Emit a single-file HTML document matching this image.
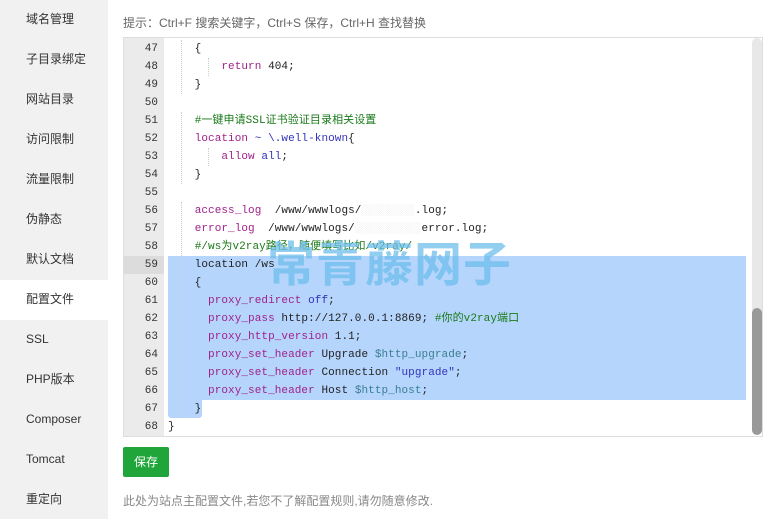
<!DOCTYPE html>
<html><head><meta charset="utf-8"><style>
*{margin:0;padding:0;box-sizing:border-box}
body{width:776px;height:519px;background:#fff;position:relative;overflow:hidden;font-family:"Liberation Sans","Noto Sans CJK SC",sans-serif}
.side{position:absolute;left:0;top:0;width:108px;height:519px;background:#f1f1f1}
.side div{position:absolute;left:26px;font-size:12px;color:#333;line-height:16px}
.act{position:absolute;left:0;top:280px;width:108px;height:40px;background:#fff}
.tip{position:absolute;left:123px;top:14px;font-size:12px;color:#666}
.ed{position:absolute;left:123px;top:37px;width:640px;height:400px;border:1px solid #ddd;overflow:hidden;background:#fff}
.gut{position:absolute;left:0;top:0;width:40px;height:400px;background:#ebebeb}
.sel{position:absolute;background:#b5d5fd}
.ln{position:absolute;left:0;width:34px;text-align:right;font:11px "Liberation Mono",monospace;color:#333;line-height:18px;height:18px}
.cl{position:absolute;left:44px;font:11px "Liberation Mono","Noto Sans CJK SC",monospace;letter-spacing:.07px;color:#222;line-height:18px;white-space:pre}
.k{color:#a0218a}.v{color:#3333bb}.c{color:#1a7a1a}.s{color:#3a7f8f}
.g{position:absolute;width:0;border-left:1px dotted #ccc;height:18px}
.wm{position:absolute;left:267px;top:225px;font:bold 48px "Noto Sans CJK SC",sans-serif;color:rgba(110,190,235,.75);letter-spacing:1px}
.sb{position:absolute;left:752px;top:38px;width:10px;height:397px;background:#e8e8e8;border-radius:5px}
.th{position:absolute;left:752px;top:308px;width:10px;height:127px;background:#999;border-radius:5px}
.btn{position:absolute;left:123px;top:447px;width:46px;height:30px;background:#20a53a;border-radius:2px;color:#fff;font-size:12px;line-height:30px;text-align:center}
.note{position:absolute;left:123px;top:492px;font-size:12px;color:#888}
</style></head><body>
<div class="side">
<div class="act" style="left:0;top:280px"></div>
<div style="top:11px">域名管理</div><div style="top:51px">子目录绑定</div><div style="top:91px">网站目录</div><div style="top:131px">访问限制</div><div style="top:171px">流量限制</div><div style="top:211px">伪静态</div><div style="top:251px">默认文档</div><div style="top:291px">配置文件</div><div style="top:331px">SSL</div><div style="top:371px">PHP版本</div><div style="top:411px">Composer</div><div style="top:451px">Tomcat</div><div style="top:491px">重定向</div>
</div>
<div class="tip">提示：Ctrl+F 搜索关键字，Ctrl+S 保存，Ctrl+H 查找替换</div>
<div class="ed">
<div class="gut"></div>
<div class="ln" style="top:218px;height:18px;background:#dcdcdc;width:40px;padding-right:6px">&nbsp;</div>
<div class="sel" style="left:44px;top:218px;width:578px;height:144px"></div>
<div class="sel" style="left:44px;top:362px;width:34px;height:18px;border-radius:0 0 3px 3px"></div>
<div class="ln" style="top:2px">47</div><div class="ln" style="top:20px">48</div><div class="ln" style="top:38px">49</div><div class="ln" style="top:56px">50</div><div class="ln" style="top:74px">51</div><div class="ln" style="top:92px">52</div><div class="ln" style="top:110px">53</div><div class="ln" style="top:128px">54</div><div class="ln" style="top:146px">55</div><div class="ln" style="top:164px">56</div><div class="ln" style="top:182px">57</div><div class="ln" style="top:200px">58</div><div class="ln" style="top:218px">59</div><div class="ln" style="top:236px">60</div><div class="ln" style="top:254px">61</div><div class="ln" style="top:272px">62</div><div class="ln" style="top:290px">63</div><div class="ln" style="top:308px">64</div><div class="ln" style="top:326px">65</div><div class="ln" style="top:344px">66</div><div class="ln" style="top:362px">67</div><div class="ln" style="top:380px">68</div>
<div class="cl" style="top:2px">    {</div>
<div class="cl" style="top:20px">        <span class="k">return</span> 404;</div>
<div class="cl" style="top:38px">    }</div>
<div class="cl" style="top:74px">    <span class="c">#一键申请SSL证书验证目录相关设置</span></div>
<div class="cl" style="top:92px">    <span class="k">location</span> <span class="v">~ \.well-known</span>{</div>
<div class="cl" style="top:110px">        <span class="k">allow</span> <span class="v">all</span>;</div>
<div class="cl" style="top:128px">    }</div>
<div class="cl" style="top:164px">    <span class="k">access_log</span>  /www/wwwlogs/<span style="color:#ddd">░░░░░░░░</span>.log;</div>
<div class="cl" style="top:182px">    <span class="k">error_log</span>  /www/wwwlogs/<span style="color:#ddd">░░░░░░░░░░</span>error.log;</div>
<div class="cl" style="top:200px">    <span class="c">#/ws为v2ray路径，随便填写比如/v2ray/</span></div>
<div class="cl" style="top:218px">    location /ws</div>
<div class="cl" style="top:236px">    {</div>
<div class="cl" style="top:254px">      <span class="k">proxy_redirect</span> <span class="v">off</span>;</div>
<div class="cl" style="top:272px">      <span class="k">proxy_pass</span> http://127.0.0.1:8869; <span class="c">#你的v2ray端口</span></div>
<div class="cl" style="top:290px">      <span class="k">proxy_http_version</span> 1.1;</div>
<div class="cl" style="top:308px">      <span class="k">proxy_set_header</span> Upgrade <span class="s">$http_upgrade</span>;</div>
<div class="cl" style="top:326px">      <span class="k">proxy_set_header</span> Connection <span class="v">"upgrade"</span>;</div>
<div class="cl" style="top:344px">      <span class="k">proxy_set_header</span> Host <span class="s">$http_host</span>;</div>
<div class="cl" style="top:362px">    }</div>
<div class="cl" style="top:380px">}</div>
<div class="g" style="left:57px;top:2px;height:54px"></div>
<div class="g" style="left:84px;top:20px"></div>
<div class="g" style="left:57px;top:74px;height:72px"></div>
<div class="g" style="left:84px;top:110px"></div>
<div class="g" style="left:57px;top:164px;height:216px"></div>
</div>
<div class="wm">常青藤网子</div>
<div class="sb"></div><div class="th"></div>
<div class="btn">保存</div>
<div class="note">此处为站点主配置文件,若您不了解配置规则,请勿随意修改.</div>
</body></html>
